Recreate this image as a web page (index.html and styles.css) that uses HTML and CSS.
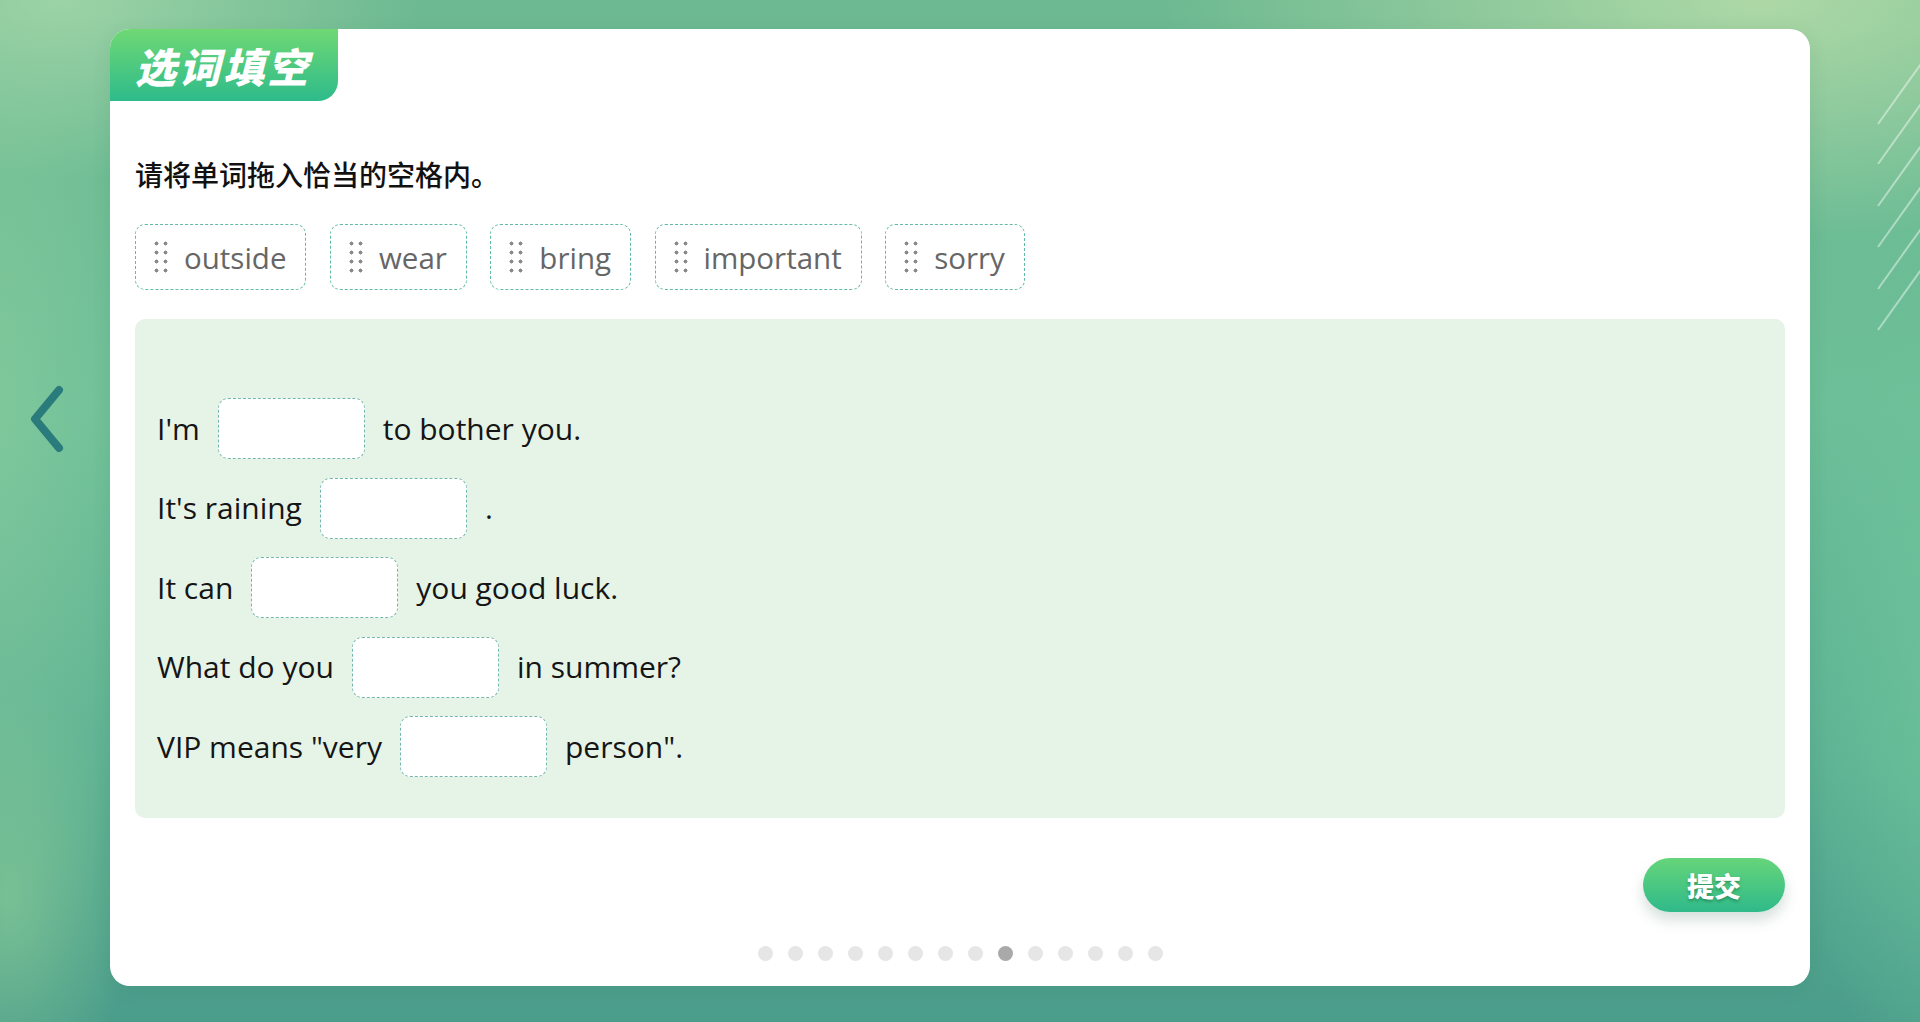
FILE: index.html
```html
<!DOCTYPE html>
<html lang="zh">
<head>
<meta charset="utf-8">
<title>选词填空</title>
<link rel="stylesheet" href="styles.css">
</head>
<body>
<div class="page">
  <svg class="deco-lines" width="80" height="340" viewBox="0 0 80 340">
    <g stroke="rgba(255,255,255,0.45)" stroke-width="2" fill="none">
      <line x1="98" y1="40" x2="38" y2="124"/>
      <line x1="98" y1="80" x2="38" y2="164"/>
      <line x1="98" y1="122" x2="38" y2="206"/>
      <line x1="98" y1="163" x2="38" y2="247"/>
      <line x1="98" y1="205" x2="38" y2="289"/>
      <line x1="98" y1="246" x2="38" y2="330"/>
    </g>
  </svg>
  <a class="nav-prev" href="#" aria-label="上一题">
    <svg width="40" height="70" viewBox="0 0 40 70"><path d="M32 6 L8 35 L32 64" fill="none" stroke="#2a7b7c" stroke-width="8" stroke-linecap="round" stroke-linejoin="round"/></svg>
  </a>
  <main class="card">
    <div class="badge">选词填空</div>
    <div class="content">
      <p class="instruction">请将单词拖入恰当的空格内。</p>
      <div class="chips">
        <div class="chip"><span class="grip"></span><span>outside</span></div>
        <div class="chip"><span class="grip"></span><span>wear</span></div>
        <div class="chip"><span class="grip"></span><span>bring</span></div>
        <div class="chip"><span class="grip"></span><span>important</span></div>
        <div class="chip"><span class="grip"></span><span>sorry</span></div>
      </div>
      <div class="sentences">
        <div class="row"><span>I'm</span><span class="blank"></span><span>to bother you.</span></div>
        <div class="row"><span>It's raining</span><span class="blank"></span><span>.</span></div>
        <div class="row"><span>It can</span><span class="blank"></span><span>you good luck.</span></div>
        <div class="row"><span>What do you</span><span class="blank"></span><span>in summer?</span></div>
        <div class="row"><span>VIP means "very</span><span class="blank"></span><span>person".</span></div>
      </div>
      <div class="actions"><button class="submit">提交</button></div>
      <div class="dots">
        <span class="dot"></span><span class="dot"></span><span class="dot"></span><span class="dot"></span><span class="dot"></span><span class="dot"></span><span class="dot"></span><span class="dot"></span><span class="dot active"></span><span class="dot"></span><span class="dot"></span><span class="dot"></span><span class="dot"></span><span class="dot"></span>
      </div>
    </div>
  </main>
</div>
</body>
</html>
```
FILE: styles.css
```css
* { box-sizing: border-box; }
html, body { margin: 0; padding: 0; height: 1022px; overflow: hidden; }
body {
  font-family: "Open Sans", "Noto Sans CJK SC", sans-serif;
  background:
    radial-gradient(ellipse 120px 220px at 10px 900px, rgba(140,205,150,0.6), rgba(140,205,150,0) 100%),
    radial-gradient(ellipse 150px 600px at 0px 420px, rgba(150,210,160,0.45), rgba(150,210,160,0) 100%),
    radial-gradient(ellipse 160px 420px at 1960px 720px, rgba(120,205,160,0.55), rgba(120,205,160,0) 100%),
    radial-gradient(ellipse 600px 240px at 1760px 0px, rgba(185,222,170,0.85), rgba(185,222,170,0) 100%),
    radial-gradient(ellipse 360px 180px at 60px 0px, rgba(165,216,170,0.85), rgba(165,216,170,0) 100%),
    linear-gradient(180deg, #6db991 0%, #6cbf98 40%, #5cb193 75%, #4b9d8b 100%);
}
.page {
  position: relative;
  height: 1022px;
  padding: 29px 110px 36px 110px;
}
.deco-lines { position: absolute; right: 0; top: 0; }
.nav-prev { position: absolute; left: 27px; top: 384px; display: block; width: 40px; height: 70px; }

.card {
  width: 1700px;
  height: 957px;
  background: #fff;
  border-radius: 20px;
  display: flex;
  flex-direction: column;
  box-shadow: 0 4px 20px rgba(0,60,40,0.08);
}
.badge {
  align-self: flex-start;
  width: 228px;
  height: 72px;
  padding-left: 25px;
  display: flex;
  align-items: center;
  color: #fff;
  font-family: "Noto Sans CJK SC", sans-serif;
  font-weight: 900;
  font-style: italic;
  font-size: 41px;
  letter-spacing: 3px;
  background: linear-gradient(180deg, #6fd874 0%, #2ebb8b 100%);
  border-radius: 20px 0 20px 0;
}
.content { padding: 0 25px 25px 25px; display: flex; flex-direction: column; flex: 1; }
.instruction {
  margin: 55px 0 0 0;
  font-family: "Noto Sans CJK SC", sans-serif;
  font-size: 28px;
  line-height: 36px;
  font-weight: 500;
  color: #111;
}
.chips { display: flex; gap: 23.5px; margin-top: 32px; }
.chip {
  height: 66px;
  display: flex;
  align-items: center;
  gap: 16px;
  padding: 0 19px 0 18px;
  border: 1.5px dashed #62bba6;
  border-radius: 10px;
  font-size: 29.5px;
  color: #666;
}
.grip {
  width: 14px;
  height: 32px;
  background-image: radial-gradient(circle, #8a8a8a 1.8px, transparent 2.2px);
  background-size: 9px 9px;
  background-position: -2px -2px;
}
.sentences {
  margin-top: 29px;
  height: 499px;
  background: #e6f4e8;
  border-radius: 10px;
  padding: 80px 22px 40px 22px;
  display: flex;
  flex-direction: column;
  gap: 18.5px;
}
.row {
  display: flex;
  align-items: center;
  gap: 18px;
  height: 61px;
  font-size: 30px;
  line-height: 1;
  padding-bottom: 2px;
  color: #151515;
}
.blank {
  width: 147px;
  height: 61px;
  background: #fff;
  border: 1.5px dashed #74b7ad;
  border-radius: 10px;
}
.actions { display: flex; justify-content: flex-end; margin-top: 40px; }
.submit {
  width: 142px;
  height: 54px;
  border: none;
  border-radius: 27px;
  background: linear-gradient(180deg, #66d57a 0%, #2fba8a 100%);
  color: #fff;
  font-family: "Noto Sans CJK SC", sans-serif;
  font-weight: 900;
  font-size: 27px;
  text-shadow: 0 2px 3px rgba(0,60,30,0.35);
  box-shadow: 0 8px 14px rgba(20,80,60,0.18);
}
.dots { display: flex; justify-content: center; gap: 15px; margin-top: 34px; }
.dot { width: 15px; height: 15px; border-radius: 50%; background: #e6e6e6; }
.dot.active { background: #a9a9a9; }
```
